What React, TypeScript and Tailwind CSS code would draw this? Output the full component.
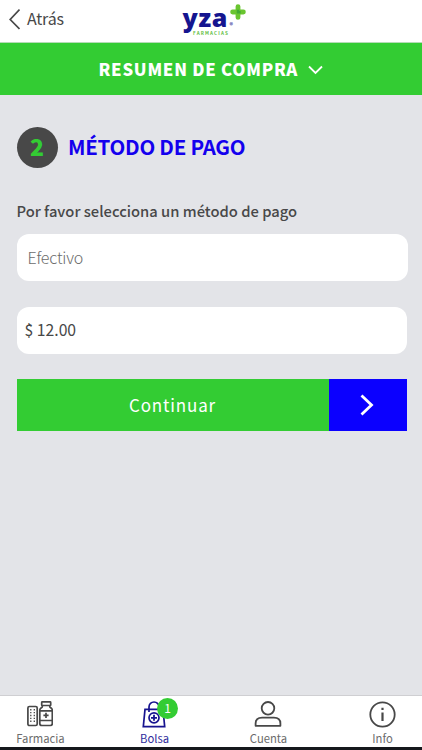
import type { ReactNode } from "react";

function Logo() {
  return (
    <div className="relative h-[34px] w-[66px]" aria-label="yza farmacias">
      <span className="absolute left-[0.5px] top-0 font-['Open_Sans'] text-[25px] leading-[26px] font-extrabold tracking-[0.7px] text-[#15158f]">
        yza
      </span>
      <svg className="absolute left-[47.5px] top-0" width="16" height="16" viewBox="0 0 16 16">
        <path d="M8 2.600v10.800M2.600 8h10.800" stroke="#69c52f" strokeWidth="4.800" strokeLinecap="round" />
        <path d="M8 5.800v2.400h2.600" stroke="#2f9c36" strokeWidth="2.400" fill="none" opacity=".7" />
      </svg>
      <span className="absolute left-[47.5px] top-[17px] text-[7px] leading-[8px] font-medium text-[#15158f]">®</span>
      <span className="absolute left-[11px] top-[26px] text-[4.6px] leading-[6px] font-bold tracking-[1.15px] text-[#62be43]">
        FARMACIAS
      </span>
    </div>
  );
}

function Tab({ label, active, children }: { label: string; active?: boolean; children: ReactNode }) {
  return (
    <button
      className={
        "flex w-[80px] flex-col items-center text-[11.25px] leading-[16px] " +
        (active ? "text-[#2f2b9c]" : "text-[#6b6b6b]")
      }
    >
      <span className="flex h-[34px] items-center pt-[2px]">{children}</span>
      <span className="pl-px">{label}</span>
    </button>
  );
}

export default function App() {
  return (
    <div className="flex h-[750px] w-full flex-col overflow-hidden bg-[#e3e4e8] font-['Noto_Sans_CJK_SC','Open_Sans',sans-serif] text-[#484848]">
      <header className="flex h-[43px] shrink-0 items-start border-b border-[#b5dcb6] bg-white">
        <button className="flex w-[182px] items-center pl-[9px] pt-[7px]">
          <svg width="11" height="22" viewBox="0 0 11 22" fill="none" stroke="#484848" strokeWidth="1.7">
            <path d="M10.500 1.500 1.200 11.500l9.300 9.500" />
          </svg>
          <span className="relative -top-px ml-[7px] text-[16px] leading-[24px] tracking-[-0.2px]">Atrás</span>
        </button>
        <div className="pt-[4px]">
          <Logo />
        </div>
      </header>

      <button className="flex h-[52px] shrink-0 items-center bg-[#33cc33] pl-[98.5px] text-white">
        <span className="text-[16.75px] leading-[24px] font-black tracking-[0.75px] whitespace-nowrap">RESUMEN DE COMPRA</span>
        <svg className="mt-[2px] ml-[9.5px]" width="15" height="10" viewBox="0 0 15 10" fill="none" stroke="currentColor" strokeWidth="1.8">
          <path d="m1 1.500 6.500 6.500L14 1.500" />
        </svg>
      </button>

      <main className="flex flex-1 flex-col pl-[16.5px] pr-[15px]">
        <h1 className="mt-[31px] flex h-[42px] items-center text-[#1400ee]">
          <span className="flex size-[41px] items-center justify-center rounded-full bg-[#484848] pb-[2px] text-[23px] leading-[38px] font-black text-[#33cc33]">
            2
          </span>
          <span className="ml-[10.5px] pb-[2px] text-[20.5px] leading-[30px] font-bold tracking-[-0.26px] whitespace-nowrap">MÉTODO DE PAGO</span>
        </h1>
        <label className="mt-[31px] text-[14.75px] leading-[24px] font-medium whitespace-nowrap">Por favor selecciona un método de pago</label>
        <div className="mt-[11px] ml-[0.5px] flex h-[47px] w-[390.5px] items-center rounded-[12px] bg-white pb-px pl-[10.5px] text-[16px] leading-[24px] font-light tracking-[-0.2px] text-[#6c6c6c]">
          Efectivo
        </div>
        <div className="mt-[25.500px] flex h-[47px] w-[390px] items-center rounded-[12px] bg-white pb-px pl-[8px] text-[15.75px] leading-[24px]">
          $ 12.00
        </div>
        <button className="mt-[25px] flex h-[52.5px] w-[390px] text-white">
          <span className="flex h-full w-[312px] items-center justify-center bg-[#33cc33] text-[17px] leading-[24px] tracking-[0.85px]">
            Continuar
          </span>
          <span className="flex h-full flex-1 items-center justify-center bg-[#0b00ff] pr-[2px]">
            <svg width="14" height="22" viewBox="0 0 14 22" fill="none" stroke="currentColor" strokeWidth="2.8">
              <path d="m1.500 1.500 10 9.500-10 9.500" />
            </svg>
          </span>
        </button>
      </main>

      <nav className="flex h-[55px] shrink-0 justify-between border-t border-b-[3px] border-t-[#cfcfd2] border-b-[#16181c] bg-white">
        <Tab label="Farmacia">
          <svg width="26" height="26" viewBox="0 0 26 26" fill="none" stroke="#484848" strokeWidth="1.7">
            <rect x=".9" y="5.500" width="9.300" height="19" rx="1.500" />
            <path d="M3.800 8v14M7.300 8v14" strokeDasharray="1.400 1.500" strokeWidth="1.300" />
            <rect x="14.700" y=".9" width="9" height="3.600" rx=".6" />
            <path d="M15.300 4.500v1.200c0 1-2.500 1.400-2.500 3.300v13.500q0 2 2 2h8.500q2 0 2-2V9c0-1.900-2.500-2.300-2.500-3.300V4.500M12.800 9.800h12.500M12.800 19.500h12.500M19 11.800v5.200M16.400 14.400h5.200" />
          </svg>
        </Tab>
        <Tab label="Bolsa" active>
          <span className="relative">
            <svg width="24" height="27" viewBox="0 0 24 27" fill="none" stroke="#17138f" strokeWidth="1.700">
              <path d="M3 8.300h18l1.700 17.400H1.300zM7 11V6a5 5 0 0 1 10 0v5" />
              <circle cx="12" cy="16.800" r="5" />
              <path d="M12 13.800v6M9 16.800h6" strokeWidth="1.800" />
            </svg>
            <span className="absolute left-[15px] top-[-3px] flex size-[21px] items-center justify-center rounded-full bg-[#33cc33] text-[12px] leading-[20px] text-white">
              1
            </span>
          </span>
        </Tab>
        <Tab label="Cuenta">
          <svg width="28" height="28" viewBox="0 0 28 28" fill="none" stroke="#484848" strokeWidth="1.800">
            <circle cx="14" cy="8.300" r="6.300" />
            <path d="M1.600 25.800v-2.300q0-5.800 6.500-5.800h11.800q6.500 0 6.500 5.800v2.300z" strokeLinejoin="round" />
          </svg>
        </Tab>
        <Tab label="Info">
          <svg className="ml-px" width="27" height="27" viewBox="0 0 27 27" fill="none" stroke="#484848" strokeWidth="1.800">
            <circle cx="13.500" cy="13.500" r="12.200" />
            <path d="M13.500 11.500v8.500M13.500 6.800v2.200" strokeWidth="2.200" />
          </svg>
        </Tab>
      </nav>
    </div>
  );
}
